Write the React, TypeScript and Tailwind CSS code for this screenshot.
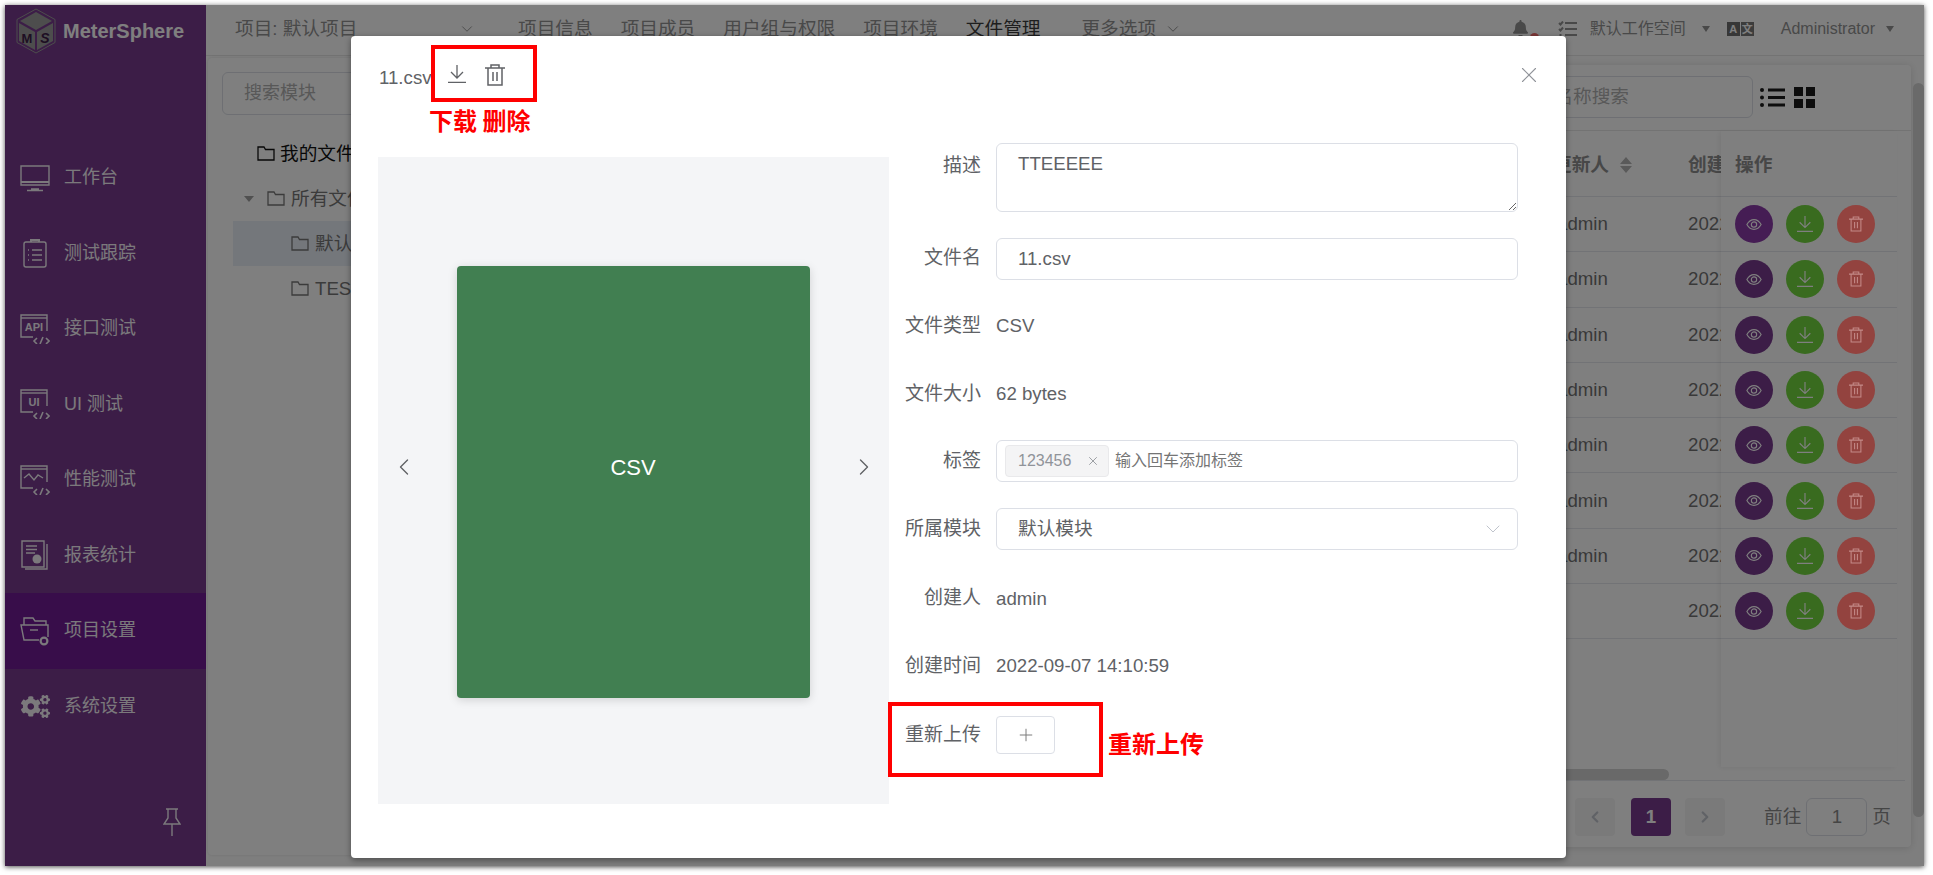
import React from 'react';
import { ChevronDown, ChevronLeft, ChevronRight, Plus, X } from 'lucide-react';
import { FaBell, FaCogs } from 'react-icons/fa';

const font = { fontFamily: '"Liberation Sans","Noto Sans CJK SC",sans-serif' };

const stroke = { fill: 'none', stroke: 'currentColor', strokeWidth: 1.4 };

const MonitorIcon = () => (
  <svg width="30" height="28" viewBox="0 0 30 28" {...stroke}>
    <path d="M1 2h28v19H1z" />
    <path d="M1 18h28" strokeWidth="2" />
    <path d="M11 25h8M7 26.5h16" strokeWidth="1.6" />
  </svg>
);

const ClipIcon = () => (
  <svg width="30" height="30" viewBox="0 0 30 30" {...stroke}>
    <rect x="4" y="4" width="22" height="25" rx="2" />
    <path d="M11 4V2h8v2" strokeWidth="2" />
    <path d="M8 12h1M12 12h10M8 17h1M12 17h10M8 22h1M12 22h10" />
  </svg>
);

const CodeBoxIcon = ({ label }: { label: string }) => (
  <svg width="30" height="30" viewBox="0 0 30 30" {...stroke}>
    <path d="M13 23H1V1h26v16" />
    <path d="M1 4h26" />
    <text x="14" y="17" textAnchor="middle" fontSize="11" fontWeight="700" fill="currentColor" stroke="none" style={font}>{label}</text>
    <path d="M17 24l-3 3 3 3M26 24l3 3-3 3M23 23l-3 7" strokeWidth="1.6" />
  </svg>
);

const PerfIcon = () => (
  <svg width="30" height="30" viewBox="0 0 30 30" {...stroke}>
    <path d="M13 23H1V1h26v16" />
    <path d="M1 4h26" />
    <path d="M4 13l5-4 5 6 4-5 5 3" />
    <path d="M17 24l-3 3 3 3M26 24l3 3-3 3M23 23l-3 7" strokeWidth="1.6" />
  </svg>
);

const ReportIcon = () => (
  <svg width="28" height="30" viewBox="0 0 28 30" {...stroke}>
    <path d="M1 1h22v26H1z" />
    <path d="M26 4v25H4" />
    <path d="M5 6h11M5 9.5h11M5 13h9" />
    <circle cx="16" cy="19" r="4.5" fill="currentColor" stroke="none" />
  </svg>
);

const FolderGearIcon = () => (
  <svg width="30" height="30" viewBox="0 0 30 30" {...stroke}>
    <path d="M19 24H4L1 9h27v12" />
    <path d="M4 9V2h9l2 3h11v4" />
    <path d="M10 14h8" />
    <circle cx="24" cy="25" r="3.4" strokeWidth="2.2" />
  </svg>
);

const PinIcon = () => (
  <svg width="18" height="28" viewBox="0 0 18 28" {...stroke}>
    <path d="M3 1h12M5 1v9l-4 6h16l-4-6V1M9 16v12" />
  </svg>
);

const Logo = () => (
  <svg width="42" height="46" viewBox="0 0 42 46">
    <path d="M21 1l19 10.5v23L21 45 2 34.5v-23z" fill="none" stroke="#9a9a9a" strokeWidth="1" />
    <path d="M21 4l16 9-16 9-16-9z" fill="#9a9a9a" />
    <path d="M4 15l16 9v18L4 33z" fill="#9a9a9a" />
    <path d="M38 15l-16 9v18l16-9z" fill="#9a9a9a" />
    <text x="12" y="35" textAnchor="middle" fontSize="13" fontWeight="700" fill="#3c1d47" style={font}>M</text>
    <text x="30" y="35" textAnchor="middle" fontSize="14" fontWeight="700" fontStyle="italic" fill="#3c1d47" style={font}>S</text>
  </svg>
);

const FolderOutline = ({ className }: { className?: string }) => (
  <svg width="18" height="15" viewBox="0 0 18 15" className={className} fill="none" stroke="currentColor" strokeWidth="1.3">
    <path d="M1 1h6l1.5 2.5H17V14H1z" />
  </svg>
);

const DownloadIcon = ({ size = 18 }: { size?: number }) => (
  <svg width={size} height={size} viewBox="0 0 18 18" fill="none" stroke="currentColor" strokeWidth="1.3">
    <path d="M9 0v12M3 7l6 6 6-6M0 17.3h18" />
  </svg>
);

const TrashIcon = ({ size = 20 }: { size?: number }) => (
  <svg width={size} height={size + 2} viewBox="0 0 20 22" fill="none" stroke="currentColor" strokeWidth="1.5">
    <path d="M0 4h20M6 4V1h8v3M3 4v17h14V4M8 8v9M12 8v9" />
  </svg>
);

const EyeIcon = () => (
  <svg width="16" height="13" viewBox="0 0 18 14" fill="none" stroke="currentColor" strokeWidth="1.3">
    <path d="M1 7c2-3.5 5-5.500 8-5.500s6 2 8 5.500c-2 3.500-5 5.500-8 5.500S3 10.500 1 7z" />
    <circle cx="9" cy="7" r="3" />
  </svg>
);

const menu = [
  { name: '工作台', icon: <MonitorIcon /> },
  { name: '测试跟踪', icon: <ClipIcon /> },
  { name: '接口测试', icon: <CodeBoxIcon label="API" /> },
  { name: 'UI 测试', icon: <CodeBoxIcon label="UI" /> },
  { name: '性能测试', icon: <PerfIcon /> },
  { name: '报表统计', icon: <ReportIcon /> },
  { name: '项目设置', icon: <FolderGearIcon />, active: true },
  { name: '系统设置', icon: <FaCogs size={29} /> },
];

const Sidebar = () => (
  <aside className="flex w-[201px] shrink-0 flex-col bg-[#783a8e] text-[#f6f2f8]">
    <div className="flex h-[135px] items-start gap-[6px] pl-[10px] pt-[3px]">
      <Logo />
      <span className="mt-[10px] text-[20px] font-bold leading-[26px] text-[#ffffff]">MeterSphere</span>
    </div>
    {menu.map((item) => (
      <div
        key={item.name}
        className={`flex h-[75.5px] items-center gap-[14px] pl-[15px] text-[18px] ${item.active ? 'bg-[#701a94]' : ''}`}
      >
        <span className="flex w-[30px] justify-center">{item.icon}</span>
        {item.name}
      </div>
    ))}
    <div className="mt-auto mb-[30px] mr-[25px] self-end">
      <PinIcon />
    </div>
  </aside>
);

const navItems = ['项目信息', '项目成员', '用户组与权限', '项目环境', '文件管理'];

const TopBar = () => (
  <header className="flex h-[51px] shrink-0 items-center border-b border-[#e6e6e6] bg-white pb-[3px] pl-[29px] text-[18.67px] text-[#929292]">
    <span className="flex w-[283px] items-center">
      项目: 默认项目
      <ChevronDown size={18} strokeWidth={1.2} className="ml-[101px]" />
    </span>
    <div className="flex items-center gap-[28px]">
      {navItems.map((n) => (
        <span key={n} className={n === '文件管理' ? 'text-[#3c3c3c]' : ''}>{n}</span>
      ))}
    </div>
    <span className="ml-[41px]">更多选项</span>
    <ChevronDown size={18} strokeWidth={1.3} className="ml-[8px]" />
    <div className="ml-auto mr-[30px] flex items-center text-[16px]">
      <div className="relative mr-[29px]">
        <FaBell size={17} />
        <span className="absolute left-[18px] top-[13px] h-[9px] w-[9px] rounded-full bg-[#f56c6c]" />
      </div>
      <svg width="19" height="16" viewBox="0 0 19 16" fill="none" stroke="currentColor" strokeWidth="2" className="mr-[13px]">
        <path d="M7 2h12M7 8h12M7 14h12M1 2l1.500 1.500L5 .5M1 8l1.500 1.500L5 6.500M1.500 14h2" />
      </svg>
      <span>默认工作空间</span>
      <span className="ml-[16px] mr-[17px] h-0 w-0 border-x-[4.500px] border-t-[6px] border-x-transparent border-t-current" />
      <span className="flex h-[14px] w-[27px] gap-px text-[11px] font-bold leading-[14px] text-white">
        <span className="w-[13px] bg-[#6e6e6e] text-center">A</span>
        <span className="w-[13px] bg-[#787878] text-center">文</span>
      </span>
      <span className="ml-[27px]">Administrator</span>
      <span className="ml-[11px] h-0 w-0 border-x-[4.500px] border-t-[6px] border-x-transparent border-t-current" />
    </div>
  </header>
);

const treeRow = 'flex h-[45px] items-center';

const FileTree = () => (
  <section className="mt-[2px] h-[797px] w-[320px] shrink-0 rounded bg-white pl-[14px] pt-[14px] shadow-[0_0_3px_rgba(0,0,0,.12)]">
    <div className="flex h-[43px] w-[300px] items-center rounded-md border border-[#dcdfe6] pl-[21px] text-[18px] text-[#b0b0b0]">搜索模块</div>
    <div className="mt-[16px] text-[18.67px] text-[#777777]">
      <div className={`${treeRow} pl-[35px] text-[#111111]`}>
        <FolderOutline className="mr-[5px]" />
        我的文件
      </div>
      <div className={`${treeRow} pl-[22px]`}>
        <span className="mr-[13px] h-0 w-0 border-x-[5px] border-t-[6px] border-x-transparent border-t-[#a0a0a0]" />
        <FolderOutline className="mr-[6px]" />
        所有文件
      </div>
      <div className={`${treeRow} ml-[11px] bg-[#e8eef6] pl-[58px]`}>
        <FolderOutline className="mr-[6px]" />
        默认模块
      </div>
      <div className={`${treeRow} pl-[69px]`}>
        <FolderOutline className="mr-[6px]" />
        TEST
      </div>
    </div>
  </section>
);

const ROWS = [0, 1, 2, 3, 4, 5, 6, 7];
const rowLine = 'flex h-[55.300px] items-center border-b border-[#e4e7ed]';

const CircleBtn = ({ color, children }: { color: string; children: React.ReactNode }) => (
  <span className={`flex h-[38px] w-[38px] items-center justify-center rounded-full ${color}`}>{children}</span>
);

const FilesTable = () => (
  <section className="mt-[9px] flex h-[782px] flex-1 flex-col rounded bg-white shadow-[0_1px_8px_rgba(0,0,0,.14)]">
    <div className="flex h-[66px] shrink-0 items-start justify-end border-b border-[#e6e6e6] pr-[151px] pt-[11px]">
      <div className="flex h-[42px] w-[400px] items-center justify-end rounded-md border border-[#dcdfe6] pr-[123px] text-[18.67px] text-[#b0b0b0]">根据名称搜索</div>
      <div className="ml-[7px] mt-[11px] flex w-[0px] items-center gap-[9px]">
        <svg width="25" height="19" viewBox="0 0 25 19" className="shrink-0 text-[#1a1a1a]" fill="currentColor">
          <circle cx="2" cy="2" r="2" /><circle cx="2" cy="9.500" r="2" /><circle cx="2" cy="17" r="2" />
          <rect x="8" y="0.500" width="17" height="3" /><rect x="8" y="8" width="17" height="3" /><rect x="8" y="15.500" width="17" height="3" />
        </svg>
        <div className="grid shrink-0 grid-cols-[9px_9px] gap-[3px]">
          {[0, 1, 2, 3].map((i) => (
            <span key={i} className="h-[9px] w-[9px] bg-[#1a1a1a]" />
          ))}
        </div>
      </div>
    </div>
    <div className="relative flex flex-1 pr-[14px]">
      <div className="flex flex-1 flex-col text-[18.67px] text-[#737373]">
        <div className="flex h-[66px] items-center justify-end border-b border-[#e4e7ed] pt-[2px] font-bold text-[#8e8e8e]">
          <span>更新人</span>
          <svg width="14" height="18" viewBox="0 0 14 18" className="ml-[10px] mr-[55px] text-[#b4b4b4]" fill="currentColor">
            <path d="M7 1l6 7H1zM7 17l6-7H1z" />
          </svg>
          <span className="w-[33px] overflow-hidden whitespace-nowrap">创建时间</span>
        </div>
        {ROWS.map((i) => (
          <div key={i} className={`${rowLine} justify-end`}>
            <span className="w-[131px]">{i < 7 ? 'admin' : ''}</span>
            <span className="w-[33px] overflow-hidden whitespace-nowrap">2022-09-07</span>
          </div>
        ))}
      </div>
      <div className="flex h-[636px] w-[176px] shrink-0 flex-col bg-white shadow-[-2px_1px_5px_rgba(0,0,0,.06)]">
        <div className="flex h-[66px] items-center border-b border-[#e4e7ed] pl-[14px] pt-[2px] text-[18.67px] font-bold text-[#8e8e8e]">操作</div>
        {ROWS.map((i) => (
          <div key={i} className={`${rowLine} gap-[13px] pl-[14px]`}>
            <CircleBtn color={`text-white ${i === 0 ? 'bg-[#8a3aa8]' : 'bg-[#783a8e]'}`}><EyeIcon /></CircleBtn>
            <CircleBtn color="bg-[#72d63e] text-white"><DownloadIcon size={16} /></CircleBtn>
            {/* this red is brighter than the mask allows, so it sits above it */}
            <span className="relative z-10">
              <CircleBtn color="bg-[#93433f] text-[#c48a88]"><TrashIcon size={14} /></CircleBtn>
            </span>
          </div>
        ))}
      </div>
      <div className="absolute bottom-[1px] left-[800px] h-[11px] w-[329px] rounded-full bg-[#d2d2d2]" />
      <div className="absolute inset-x-0 bottom-0 mr-[6px] h-px bg-[#e4e7ed]" />
    </div>
    <div className="flex h-[66px] shrink-0 items-start justify-end pr-[20px] pt-[17px] text-[18.67px] text-[#8a8a8a]">
      <span className="flex h-[38px] w-[40px] items-center justify-center rounded-sm bg-[#f4f4f5] text-[#c0c4cc]"><ChevronLeft size={18} strokeWidth={3} /></span>
      <span className="ml-[16px] mr-[14px] flex h-[38px] w-[40px] items-center justify-center rounded-sm bg-[#783a8e] font-bold text-white">1</span>
      <span className="mr-[39px] flex h-[38px] w-[40px] items-center justify-center rounded-sm bg-[#f4f4f5] text-[#c0c4cc]"><ChevronRight size={18} strokeWidth={3} /></span>
      <span className="leading-[38px]">前往</span>
      <span className="mx-[5px] flex h-[38px] w-[61px] items-center justify-center rounded-md border border-[#dcdfe6]">1</span>
      <span className="leading-[38px]">页</span>
    </div>
  </section>
);

const Field = ({ label, children, className = '' }: { label: string; children?: React.ReactNode; className?: string }) => (
  <div className={`flex h-[42px] items-center ${className}`}>
    <span className="w-[92px] whitespace-nowrap text-right text-[19px]">{label}</span>
    <div className="ml-[15px] w-[522px]">{children}</div>
  </div>
);

const boxCls = 'flex h-[42px] items-center rounded-md border border-[#dcdfe6]';

const FileDialog = () => (
  <div className="absolute left-[346px] top-[31px] z-20 h-[822px] w-[1215px] rounded-sm bg-white text-[18.67px] text-[#606266] shadow-[0_2px_6px_rgba(0,0,0,.4)]">
    <div className="flex h-[107px] items-start pl-[28px] pr-[24px] pt-[28px]">
      <span className="leading-[28px]">11.csv</span>
      <span className="ml-[16px] mt-[1px]"><DownloadIcon /></span>
      <span className="ml-[19px]"><TrashIcon /></span>
      <X size={26} strokeWidth={1} className="ml-auto -mt-[2px] text-[#909399]" />
    </div>
    <div className="flex pl-[27px]">
      <div className="mt-[14px] flex h-[647px] w-[511px] items-center justify-between bg-[#f4f5f7] pl-[12px] pr-[11px]">
        <ChevronLeft size={28} strokeWidth={1.2} className="mb-[27px]" />
        <div className="mt-[3px] flex h-[432px] w-[353px] items-center justify-center rounded-sm bg-[#417f51] pb-[30px] text-[22px] text-white shadow-[0_2px_10px_rgba(0,0,0,.15)]">CSV</div>
        <ChevronRight size={28} strokeWidth={1.2} className="mb-[27px] ml-[2px]" />
      </div>
      <div className="flex flex-col gap-[25.600px]">
        <div className="flex h-[69px] items-start">
          <span className="mt-[9px] w-[92px] text-right text-[19px]">描述</span>
          <textarea
            readOnly
            defaultValue="TTEEEEE"
            className="ml-[15px] h-[69px] w-[522px] resize-y rounded-md border border-[#dcdfe6] px-[21px] py-[6px] leading-[28px] text-[#606266] outline-none"
          />
        </div>
        <Field label="文件名"><div className={`${boxCls} pl-[21px]`}>11.csv</div></Field>
        <Field label="文件类型">CSV</Field>
        <Field label="文件大小">62 bytes</Field>
        <Field label="标签">
          <div className={`${boxCls} pl-[8px] text-[16px]`}>
            <span className="flex h-[32px] w-[104px] items-center rounded border border-[#e9e9eb] bg-[#f4f4f5] pl-[12px] text-[#909399]">
              123456
              <X size={14} strokeWidth={1.5} className="ml-[15px]" />
            </span>
            <span className="ml-[6px] text-[#757575]">输入回车添加标签</span>
          </div>
        </Field>
        <Field label="所属模块">
          <div className={`${boxCls} justify-between pl-[21px] pr-[12px]`}>
            默认模块
            <ChevronDown size={24} strokeWidth={1} className="text-[#c0c4cc]" />
          </div>
        </Field>
        <Field label="创建人" className="mt-[2px]">admin</Field>
        <Field label="创建时间">2022-09-07 14:10:59</Field>
        <div className="mt-[3px] flex items-center">
          <span className="w-[92px] whitespace-nowrap text-right text-[19px]">重新上传</span>
          <span className="ml-[15px] flex h-[38px] w-[59px] items-center justify-center rounded border border-[#dcdfe6] text-[#7d7d7d]">
            <Plus size={20} strokeWidth={1.2} />
          </span>
        </div>
      </div>
    </div>

    {/* red annotations drawn over the dialog */}
    <div className="absolute left-[80px] top-[9px] h-[57px] w-[106px] border-[4px] border-[#ff0000]" />
    <div className="absolute left-[78px] top-[69px] text-[24px] font-bold leading-[30px] text-[#ff0000]" style={{ fontFamily: '"Noto Sans CJK SC",sans-serif' }}>下载 删除</div>
    <div className="absolute left-[537px] top-[666px] h-[75px] w-[215px] border-[4px] border-[#ff0000]" />
    <div className="absolute left-[757px] top-[692px] text-[24px] font-bold leading-[30px] text-[#ff0000]" style={{ fontFamily: '"Noto Sans CJK SC",sans-serif' }}>重新上传</div>
  </div>
);

export default function App() {
  return (
    <div className="h-[875px] w-full overflow-hidden bg-white pl-[5px] pt-[5px]" style={font}>
      <div className="relative flex h-[861px] w-[1919px] shadow-[0_1px_5px_rgba(0,0,0,.7)]">
        <Sidebar />
        <div className="flex min-w-0 flex-1 flex-col bg-[#fdfdfd]">
          <TopBar />
          <main className="flex flex-1 gap-[12px] pl-[2px] pr-[13px]">
            <FileTree />
            <FilesTable />
          </main>
        </div>
        {/* page scrollbar, dimmed with the rest of the page */}
        <div className="absolute right-0 top-[78px] h-[734px] w-[11px] rounded-full bg-[#d4d4d4]" />
        {/* modal mask */}
        <div className="absolute inset-0 bg-black/50" />
        <FileDialog />
      </div>
    </div>
  );
}
